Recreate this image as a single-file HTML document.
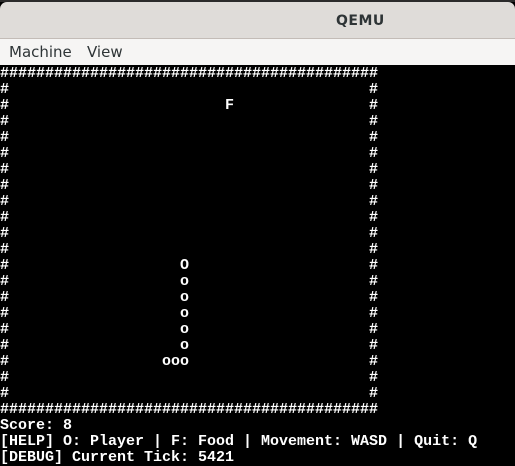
<!DOCTYPE html>
<html><head><style>
html,body{margin:0;padding:0;width:515px;height:466px;overflow:hidden;background:#000}
#top{position:absolute;left:0;top:0;width:515px;height:2px;background:#2b2b2b}
#title{position:absolute;left:0;top:2px;width:515px;height:36px;background:#dfdcd9;border-radius:7px 7px 0 0;border-bottom:1px solid #c3bcb7}
#title span{position:absolute;left:336px;top:11px;font:bold 14px "DejaVu Sans",sans-serif;color:#2e3436;letter-spacing:0.5px}
#menu{position:absolute;left:0;top:39px;width:515px;height:26px;background:#f6f5f4;font:15px "DejaVu Sans",sans-serif;color:#2e3436}
#menu span{position:absolute;top:4px}
pre{position:absolute;left:0;top:66px;margin:0;font:bold 15px/16px "Liberation Mono",monospace;color:#fff;white-space:pre}
</style></head><body>
<div id="top"></div>
<div id="title"><span>QEMU</span></div>
<div id="menu"><span style="left:9px">Machine</span><span style="left:87px">View</span></div>
<pre>##########################################
#                                        #
#                        F               #
#                                        #
#                                        #
#                                        #
#                                        #
#                                        #
#                                        #
#                                        #
#                                        #
#                                        #
#                   O                    #
#                   o                    #
#                   o                    #
#                   o                    #
#                   o                    #
#                   o                    #
#                 ooo                    #
#                                        #
#                                        #
##########################################
Score: 8
[HELP] O: Player | F: Food | Movement: WASD | Quit: Q
[DEBUG] Current Tick: 5421</pre>
</body></html>
